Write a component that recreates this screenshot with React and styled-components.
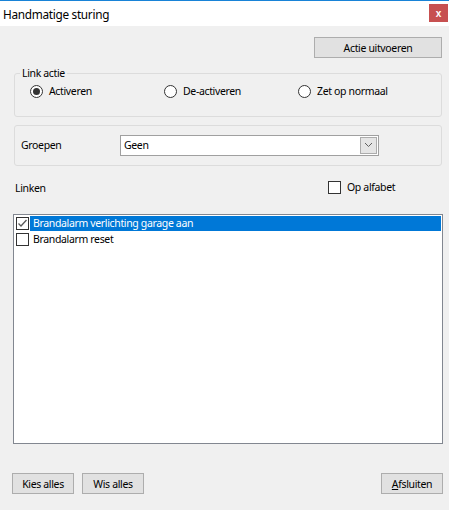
import React from 'react'
import styled, { createGlobalStyle } from 'styled-components'

const GlobalStyle = createGlobalStyle`
  html, body {
    margin: 0;
    padding: 0;
    background: #f0f0f0;
  }
  body {
    font: 10.5px 'Noto Sans', 'Liberation Sans', sans-serif;
    letter-spacing: -0.35px;
    color: #000;
  }
`

const Window = styled.div`
  width: 449px;
  height: 510px;
  display: flex;
  flex-direction: column;
  background: #f0f0f0;
  overflow: hidden;
`

const TitleBar = styled.div`
  height: 25px;
  border-top: 1px solid #1883d7;
  background: #fff;
  display: flex;
  align-items: center;
  justify-content: space-between;
  padding-left: 3px;
  padding-right: 1px;
  font-size: 11.8px;
  letter-spacing: -0.3px;
`

const CloseButton = styled.div`
  width: 19px;
  height: 18px;
  margin-top: -1px;
  background: #c75050;
  color: #fff;
  font: bold 10px 'Liberation Sans', sans-serif;
  letter-spacing: 0;
  display: flex;
  align-items: center;
  justify-content: center;
`

const Body = styled.div`
  flex: 1;
  display: flex;
  flex-direction: column;
  padding: 11px 6px 0 12px;
`

const Button = styled.button`
  height: 21px;
  width: ${props => props.width || 62}px;
  background: #e1e1e1;
  border: 1px solid #adadad;
  font: inherit;
  letter-spacing: inherit;
  color: #000;
  padding: 0;
  u { text-decoration: underline; }
`

const TopRow = styled.div`
  display: flex;
  justify-content: flex-end;
  padding-right: 1px;
`

const GroupBox = styled.fieldset`
  margin: ${props => props.top}px 1px 0 2px;
  border: 1px solid #dcdcdc;
  border-radius: 3px;
  padding: 0;
  height: ${props => props.height}px;
  box-sizing: border-box;
  min-width: 0;
`

const Legend = styled.legend`
  margin-left: 5px;
  padding: 0 2px;
  line-height: 14px;
`

const RadioRow = styled.div`
  display: flex;
  align-items: center;
  height: 26px;
  margin-top: -2px;
  padding-left: 15px;
`

const RadioItem = styled.label`
  display: flex;
  align-items: center;
  gap: 6px;
  width: ${props => props.width}px;
`

const RadioCircle = styled.span`
  width: 13px;
  height: 13px;
  box-sizing: border-box;
  border-radius: 50%;
  border: 1px solid #333;
  background: #fff;
  display: flex;
  align-items: center;
  justify-content: center;
  &::after {
    content: '';
    display: ${props => (props.checked ? 'block' : 'none')};
    width: 7px;
    height: 7px;
    border-radius: 50%;
    background: #333;
  }
`

const GroupRow = styled.div`
  display: flex;
  align-items: center;
  height: 38px;
  padding-left: 6px;
`

const FieldLabel = styled.span`
  width: 99px;
`

const Combo = styled.div`
  width: 259px;
  height: 21px;
  box-sizing: border-box;
  border: 1px solid #a0a0a0;
  background: #fff;
  display: flex;
  align-items: center;
  justify-content: space-between;
  padding: 0 1px 0 3px;
`

const ComboButton = styled.span`
  width: 17px;
  height: 17px;
  box-sizing: border-box;
  background: #e5e5e5;
  border: 1px solid #acacac;
  display: flex;
  align-items: center;
  justify-content: center;
`

const ListHeader = styled.div`
  display: flex;
  align-items: flex-start;
  margin-top: 14px;
  padding-left: 3px;
  height: 34px;
`

const HeaderLabel = styled.span`
  width: 313px;
  line-height: 16px;
`

const CheckLabel = styled.label`
  display: flex;
  align-items: center;
  gap: 6px;
  margin-top: 0;
`

const CheckBox = styled.span`
  width: 13px;
  height: 13px;
  box-sizing: border-box;
  border: 1px solid #333;
  background: #fff;
  display: flex;
  align-items: center;
  justify-content: center;
  flex-shrink: 0;
`

const ListBox = styled.div`
  height: 230px;
  margin-left: 1px;
  box-sizing: border-box;
  border: 1px solid #828790;
  background: #fff;
  padding: 1px 1px 0 2px;
`

const ListItem = styled.div`
  display: flex;
  align-items: center;
  height: 15px;
  margin-bottom: 1px;
`

const ItemText = styled.span`
  flex: 1;
  height: 15px;
  line-height: 15px;
  padding-left: 3px;
  margin-left: 1px;
  background: ${props => (props.selected ? '#0078d7' : 'transparent')};
  color: ${props => (props.selected ? '#fff' : '#000')};
`

const Footer = styled.div`
  display: flex;
  align-items: center;
  gap: 8px;
  margin-top: 29px;
`

const Spacer = styled.div`
  flex: 1;
`

const Check = () => (
  <svg width="11" height="11" viewBox="0 0 11 11">
    <path d="M1.5 5.5 L4 8 L9.5 2" fill="none" stroke="#5a5a5a" strokeWidth="1.3" />
  </svg>
)

const Chevron = () => (
  <svg width="9" height="6" viewBox="0 0 9 6">
    <path d="M1 1 L4.5 4.5 L8 1" fill="none" stroke="#606060" strokeWidth="1" />
  </svg>
)

const items = [
  { text: 'Brandalarm verlichting garage aan', checked: true, selected: true },
  { text: 'Brandalarm reset', checked: false, selected: false },
]

export default function App() {
  return (
    <Window>
      <GlobalStyle />
      <TitleBar>
        <span>Handmatige sturing</span>
        <CloseButton>x</CloseButton>
      </TitleBar>
      <Body>
        <TopRow>
          <Button width={128}>Actie uitvoeren</Button>
        </TopRow>
        <GroupBox top={8} height={51}>
          <Legend>Link actie</Legend>
          <RadioRow>
            <RadioItem width={134}>
              <RadioCircle checked />
              Activeren
            </RadioItem>
            <RadioItem width={134}>
              <RadioCircle />
              De-activeren
            </RadioItem>
            <RadioItem>
              <RadioCircle />
              Zet op normaal
            </RadioItem>
          </RadioRow>
        </GroupBox>
        <GroupBox top={8} height={41}>
          <GroupRow>
            <FieldLabel>Groepen</FieldLabel>
            <Combo>
              <span>Geen</span>
              <ComboButton>
                <Chevron />
              </ComboButton>
            </Combo>
          </GroupRow>
        </GroupBox>
        <ListHeader>
          <HeaderLabel>Linken</HeaderLabel>
          <CheckLabel>
            <CheckBox />
            Op alfabet
          </CheckLabel>
        </ListHeader>
        <ListBox>
          {items.map(item => (
            <ListItem key={item.text}>
              <CheckBox>{item.checked && <Check />}</CheckBox>
              <ItemText selected={item.selected}>{item.text}</ItemText>
            </ListItem>
          ))}
        </ListBox>
        <Footer>
          <Button>Kies alles</Button>
          <Button>Wis alles</Button>
          <Spacer />
          <Button>
            <u>A</u>fsluiten
          </Button>
        </Footer>
      </Body>
    </Window>
  )
}
